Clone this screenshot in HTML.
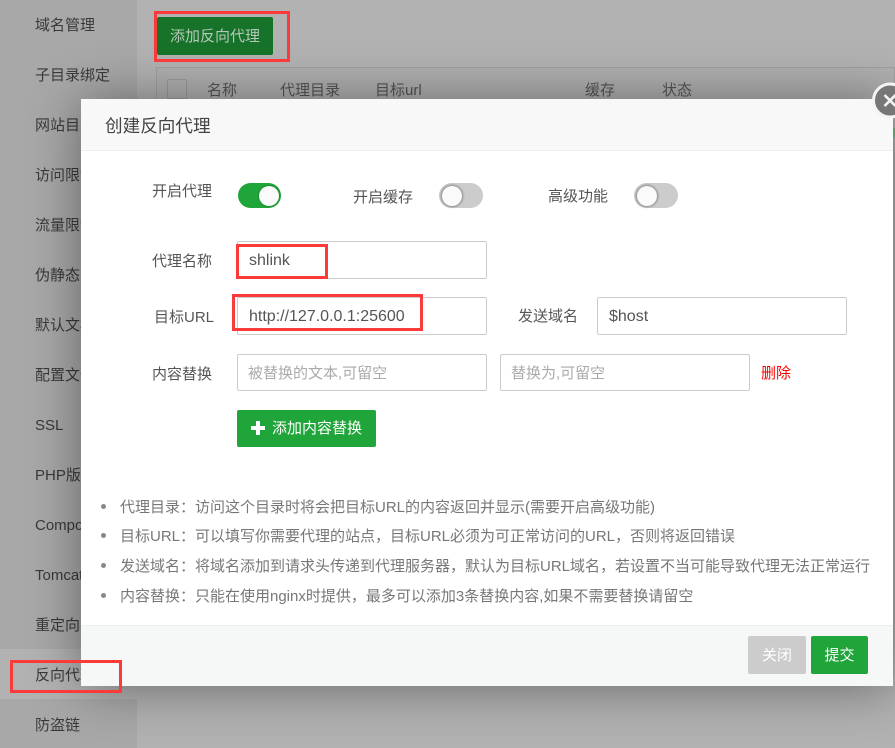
<!DOCTYPE html>
<html><head><meta charset="utf-8">
<style>
html,body{margin:0;padding:0}
body{width:895px;height:748px;overflow:hidden;position:relative;background:#b2b2b2;font-family:"Liberation Sans","Noto Sans CJK SC",sans-serif;font-size:15px;color:#555}
.a{position:absolute;white-space:nowrap}
.side{left:0;top:0;width:137px;height:748px;background:#a8a8a8}
.active{left:0;top:649px;width:137px;height:50px;background:#b2b2b2}
.s{left:35px;color:#3a3a3a;line-height:20px;font-size:15px;margin-top:1px}
.th{top:80px;color:#555;line-height:20px;font-size:15px;margin-top:1px}
.modal{left:81px;top:99px;width:812px;height:587px;background:#fff;box-shadow:1px 1px 50px rgba(0,0,0,.42)}
.hd{left:81px;top:99px;width:812px;height:52px;background:#f8f8f8;border-bottom:1px solid #eee;box-sizing:border-box}
.ft{left:81px;top:625px;width:812px;height:61px;background:#f6f8f8;border-top:1px solid #eee;box-sizing:border-box}
.l{color:#555;line-height:20px;font-size:15px;margin-top:1px}
.in{box-sizing:border-box;height:38px;border:1px solid #ccc;border-radius:2px;background:#fff;padding-left:11px;line-height:38px;font-size:16px;color:#555}
.ph{color:#aaa;font-size:15px;padding-left:10px}
.sw{width:44px;height:26px;border-radius:13px;background:#ccc;box-sizing:border-box}
.kn{position:absolute;width:20px;height:20px;border-radius:50%;background:#fafafa;box-shadow:0 0 2px 1px rgba(0,0,0,.35)}
.li{left:120px;color:#777;line-height:20px;font-size:15px}
.dot{left:101px;width:5px;height:5px;border-radius:50%;background:#888}
.red{border:3px solid #fb3a3a;box-sizing:border-box}
</style></head><body>
<div class="a side"></div>
<div class="a active"></div>
<div class="a s" style="top:15px">域名管理</div>
<div class="a s" style="top:65px">子目录绑定</div>
<div class="a s" style="top:115px">网站目录</div>
<div class="a s" style="top:165px">访问限制</div>
<div class="a s" style="top:215px">流量限制</div>
<div class="a s" style="top:265px">伪静态</div>
<div class="a s" style="top:315px">默认文档</div>
<div class="a s" style="top:365px">配置文件</div>
<div class="a s" style="top:415px">SSL</div>
<div class="a s" style="top:465px">PHP版本</div>
<div class="a s" style="top:515px">Composer</div>
<div class="a s" style="top:565px">Tomcat</div>
<div class="a s" style="top:615px">重定向</div>
<div class="a s" style="top:665px">反向代理</div>
<div class="a s" style="top:715px">防盗链</div>

<div class="a" style="left:157px;top:17px;width:116px;height:38px;background:#18732a;border-radius:2px;color:#b5c9b9;line-height:40px;text-align:center;font-size:15px">添加反向代理</div>
<div class="a" style="left:156px;top:67px;width:739px;height:40px;border:1px solid #a0a0a0;border-bottom:0;box-sizing:border-box;background:#b0b0b0"></div>
<div class="a" style="left:167px;top:79px;width:20px;height:20px;border:1px solid #9a9a9a;border-radius:2px;box-sizing:border-box"></div>
<div class="a th" style="left:207px">名称</div>
<div class="a th" style="left:280px">代理目录</div>
<div class="a th" style="left:375px">目标url</div>
<div class="a th" style="left:585px">缓存</div>
<div class="a th" style="left:662px">状态</div>

<div class="a modal"></div>
<div class="a hd"></div>
<div class="a" style="left:105px;top:115px;font-size:17.6px;line-height:22px;color:#444">创建反向代理</div>
<div class="a" style="left:893px;top:128px;width:2px;height:10px;background:#5f9a6c"></div>

<svg class="a" style="left:872px;top:82px" width="23" height="37" viewBox="0 0 23 37"><circle cx="18" cy="18.500" r="16.500" fill="#777" stroke="#f4f4f4" stroke-width="3"/><path d="M12.500 13L23.500 24M23.500 13L12.500 24" stroke="#f4f4f4" stroke-width="2.600" fill="none"/></svg>

<div class="a l" style="left:152px;top:181px">开启代理</div>
<div class="a sw" style="left:238px;top:183px;background:#20a53a;height:25px;width:43px"></div>
<div class="a kn" style="left:259px;top:186px;box-shadow:0 0 1px 1px rgba(0,0,0,.15)"></div>
<div class="a l" style="left:353px;top:187px">开启缓存</div>
<div class="a sw" style="left:439px;top:183px;height:25px"></div>
<div class="a kn" style="left:442px;top:186px"></div>
<div class="a l" style="left:548px;top:186px">高级功能</div>
<div class="a sw" style="left:634px;top:183px;height:25px"></div>
<div class="a kn" style="left:637px;top:186px"></div>

<div class="a l" style="left:152px;top:251px">代理名称</div>
<div class="a in" style="left:237px;top:241px;width:250px">shlink</div>
<div class="a l" style="left:154px;top:307px">目标URL</div>
<div class="a in" style="left:237px;top:297px;width:250px">http://127.0.0.1:25600</div>
<div class="a l" style="left:518px;top:306px">发送域名</div>
<div class="a in" style="left:597px;top:297px;width:250px">$host</div>
<div class="a l" style="left:152px;top:364px">内容替换</div>
<div class="a in ph" style="left:237px;top:354px;width:250px;height:37px">被替换的文本,可留空</div>
<div class="a in ph" style="left:500px;top:354px;width:250px;height:37px">替换为,可留空</div>
<div class="a" style="left:761px;top:364px;color:#f00;line-height:20px;font-size:15px">删除</div>

<div class="a" style="left:237px;top:410px;width:139px;height:37px;background:#20a53a;border-radius:2px"></div>
<svg class="a" style="left:251px;top:421px" width="14" height="14" viewBox="0 0 14 14"><path d="M5 0h4v5h5v4H9v5H5V9H0V5h5z" fill="#fff"/></svg>
<div class="a" style="left:272px;top:419px;color:#fff;line-height:20px;font-size:15px">添加内容替换</div>

<div class="a dot" style="top:504px"></div>
<div class="a li" style="top:498px">代理目录：访问这个目录时将会把目标URL的内容返回并显示(需要开启高级功能)</div>
<div class="a dot" style="top:533px"></div>
<div class="a li" style="top:527px">目标URL：可以填写你需要代理的站点，目标URL必须为可正常访问的URL，否则将返回错误</div>
<div class="a dot" style="top:563px"></div>
<div class="a li" style="top:557px">发送域名：将域名添加到请求头传递到代理服务器，默认为目标URL域名，若设置不当可能导致代理无法正常运行</div>
<div class="a dot" style="top:593px"></div>
<div class="a li" style="top:587px">内容替换：只能在使用nginx时提供，最多可以添加3条替换内容,如果不需要替换请留空</div>

<div class="a ft"></div>
<div class="a" style="left:748px;top:636px;width:58px;height:38px;background:#ccc;border-radius:2px;color:#fff;text-align:center;line-height:40px;font-size:15px">关闭</div>
<div class="a" style="left:811px;top:636px;width:57px;height:38px;background:#20a53a;border-radius:2px;color:#fff;text-align:center;line-height:40px;font-size:15px">提交</div>

<div class="a red" style="left:154px;top:11px;width:136px;height:51px"></div>
<div class="a red" style="left:236px;top:244px;width:92px;height:35px"></div>
<div class="a red" style="left:232px;top:294px;width:191px;height:37px"></div>
<div class="a red" style="left:10px;top:660px;width:112px;height:33px"></div>
</body></html>
